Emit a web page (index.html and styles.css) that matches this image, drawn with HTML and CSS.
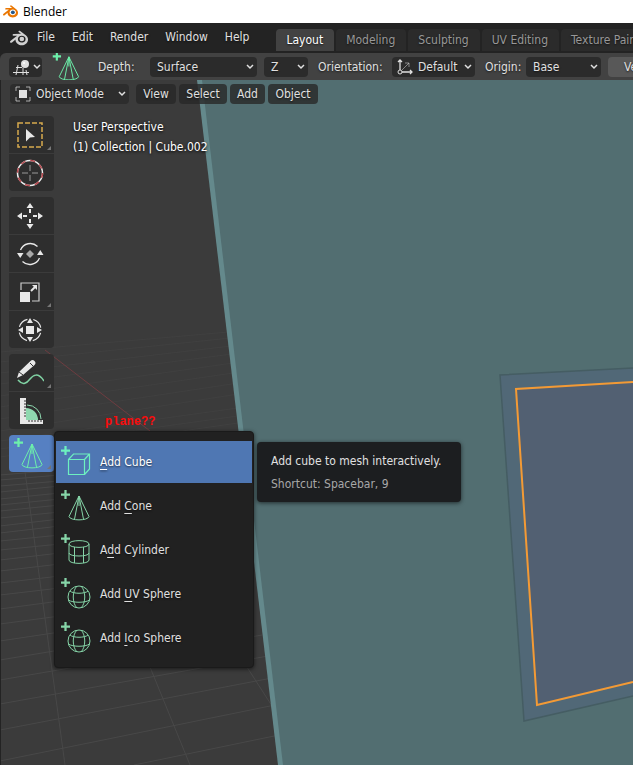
FILE: index.html
```html
<!DOCTYPE html>
<html lang="en">
<head>
<meta charset="utf-8">
<meta name="viewport" content="width=device-width, initial-scale=1">
<title>Blender</title>
<link rel="stylesheet" href="styles.css">
</head>
<body>
<svg class="defs" aria-hidden="true">
  <symbol id="logo" viewBox="0 0 24 24"><path d="M7.35 14.831c.006.314.106.922.256 1.398a7.372 7.372 0 0 0 1.593 2.757 8.227 8.227 0 0 0 2.787 2.001 8.947 8.947 0 0 0 3.66.76 8.964 8.964 0 0 0 3.657-.772 8.285 8.285 0 0 0 2.785-2.01 7.428 7.428 0 0 0 1.592-2.762 6.964 6.964 0 0 0 .25-3.074 7.123 7.123 0 0 0-1.016-2.779 7.764 7.764 0 0 0-1.852-2.043h.002L13.566 2.55l-.02-.015c-.492-.378-1.319-.376-1.86.002-.547.382-.609 1.015-.123 1.415l-.001.001 3.126 2.543-9.53.01h-.013c-.788.001-1.545.518-1.695 1.172-.154.665.38 1.217 1.2 1.22V8.9l4.83-.01-8.62 6.617-.034.025c-.813.622-1.075 1.658-.563 2.313.52.667 1.625.668 2.447.004L7.414 14s-.069.52-.063.831zm12.09 1.741c-.97.988-2.326 1.548-3.795 1.55-1.47.004-2.827-.552-3.797-1.538a4.51 4.51 0 0 1-1.036-1.622 4.282 4.282 0 0 1 .282-3.519 4.702 4.702 0 0 1 1.153-1.371c.942-.768 2.141-1.183 3.396-1.185 1.256-.002 2.455.41 3.398 1.175.48.391.87.854 1.152 1.367a4.28 4.28 0 0 1 .522 1.706 4.236 4.236 0 0 1-.239 1.811 4.54 4.54 0 0 1-1.035 1.626"/><circle class="logo-eye" cx="15.750" cy="13.350" r="3.100"/></symbol>
  <symbol id="chevron" viewBox="0 0 8 6"><path d="M1 1l3 3 3-3" fill="none" stroke="currentColor" stroke-width="1.500"/></symbol>
  <symbol id="plus" viewBox="0 0 8 8"><path d="M4 0v8M0 4h8" stroke="currentColor" stroke-width="2"/></symbol>
  <symbol id="cone" viewBox="0 0 24 26"><path d="M12 1L2 21.500C3 26 21 26 22 21.500L12 1zM12 1L7.500 24.200M12 1l4.500 23.200M12 1v10" fill="none" stroke="currentColor"/></symbol>
  <symbol id="cube" viewBox="0 0 24 24"><path d="M1.500 7.500h16v15h-16zM1.500 7.500l5-5.500h16v15l-5 5.500M17.500 7.500l5-5.500" fill="none" stroke="currentColor" stroke-width="1.200"/></symbol>
  <symbol id="cylinder" viewBox="0 0 24 26"><path d="M2 5v16c0 4.500 20 4.500 20 0V5M2 5c0-4.500 20-4.500 20 0S2 9.500 2 5zM2 14c0 4 20 4 20 0M7.500 8v16M16.500 8v16" fill="none" stroke="currentColor"/></symbol>
  <symbol id="sphere" viewBox="0 0 24 24"><path d="M23 12a11 11 0 1 1-22 0 11 11 0 0 1 22 0zM3 6c3 3 15 3 18 0M1.500 15c4 3 17 3 21 0M10 1C5 6 5 18 10 23M14 1c5 5 5 17 0 22" fill="none" stroke="currentColor"/></symbol>
</svg>

<header class="titlebar">
  <svg class="title-logo" aria-hidden="true"><use href="#logo"/></svg>
  <span>Blender</span>
</header>

<nav class="menubar" aria-label="Main">
  <svg class="app-logo" aria-hidden="true"><use href="#logo"/></svg>
  <button class="menu-button">File</button>
  <button class="menu-button">Edit</button>
  <button class="menu-button">Render</button>
  <button class="menu-button">Window</button>
  <button class="menu-button">Help</button>
  <div class="tabs" role="tablist" aria-label="Workspaces">
    <button class="tab tab-active" role="tab" aria-selected="true">Layout</button>
    <button class="tab" role="tab">Modeling</button>
    <button class="tab" role="tab">Sculpting</button>
    <button class="tab" role="tab">UV Editing</button>
    <button class="tab" role="tab">Texture Paint</button>
  </div>
</nav>

<section class="settings" aria-label="Tool settings">
  <button class="snap" aria-label="Editor type">
    <svg class="snap-icon" viewBox="0 0 18 18" fill="none" stroke="currentColor" aria-hidden="true"><path d="M3 9.500h6M0 14.500h16M5 7L3 17M10 10v7M13 12l1 5"/><circle cx="12" cy="6" r="4" fill="currentColor" stroke="none"/><circle cx="11" cy="5" r="1" fill="#fff" stroke="none"/></svg>
    <svg class="chevron" aria-hidden="true"><use href="#chevron"/></svg>
  </button>
  <svg class="active-tool" viewBox="0 0 28 28" aria-hidden="true"><use href="#plus" width="9" height="9" y="-1"/><use href="#cone" x="5" y="3" width="24" height="26"/></svg>
  <label class="label-depth" for="depth">Depth:</label>
  <span class="field field-depth"><select id="depth"><option>Surface</option></select><svg class="chevron" aria-hidden="true"><use href="#chevron"/></svg></span>
  <span class="field field-axis"><select aria-label="Plane axis"><option>Z</option></select><svg class="chevron" aria-hidden="true"><use href="#chevron"/></svg></span>
  <label class="label-orientation" for="orientation">Orientation:</label>
  <span class="field field-icon field-orientation">
    <svg class="field-mark" viewBox="0 0 16 16" fill="none" stroke="currentColor" aria-hidden="true"><path d="M3 11V1M1 3l2-2 2 2M5 13h10M13 11l2 2-2 2" stroke-width="1.300"/><path d="M5 11l7-7M8 4h4v4" opacity=".5"/><circle cx="3" cy="13" r="2"/></svg>
    <select id="orientation"><option>Default</option></select><svg class="chevron" aria-hidden="true"><use href="#chevron"/></svg></span>
  <label class="label-origin" for="origin">Origin:</label>
  <span class="field field-origin"><select id="origin"><option>Base</option></select><svg class="chevron" aria-hidden="true"><use href="#chevron"/></svg></span>
  <button class="vertex">Vertex</button>
</section>

<main class="viewport">
  <svg class="scene" viewBox="0 80 633 685" preserveAspectRatio="xMinYMin slice" role="img" aria-label="3D scene">
    <g class="grid grid-far">
      <path d="M0 352L240 331M0 362L240 337M0 373L240 345M0 384L240 353M0 396L240 362M0 407L240 372M0 419L245 382M0 431L245 393M0 441L245 407M0 449L245 415M0 457L245 422"/>
    </g>
    <g class="grid">
      <path d="M0 475l60-5M0 480l60-5M0 486l60-5M0 492l60-6M0 499l60-6M0 505l60-6M0 511l60-6M0 518l60-6M0 526l60-7M0 533l60-7M0 541l60-6M0 550l60-6M0 560l60-7M0 571l60-7M0 583l60-7M0 595l60-7M0 609l60-8M0 624l60-8M0 641l60-9M0 660l60-10"/>
      <path d="M0 680L262 635M0 704L268 656M0 730L272 678M0 761L275 705M134 765L279 735M20 435L65 765M130 618L190 765M236 650L272 706"/>
    </g>
    <path class="axis" d="M45 350L150 431"/>
    <path class="plane-edge" d="M197 80h10l77 685h-6z"/>
    <path class="plane" d="M202 80H633V765H283z"/>
    <path class="frame" d="M633 368L500 375L524 721L633 696"/>
    <path class="pane" d="M633 382L516 389L537 705L633 682"/>
    <text class="note" x="105" y="425">plane??</text>
    <path class="region-edge" d="M0 80h1v685H0z"/>
  </svg>

  <div class="mode-bar">
    <span class="field field-icon field-mode">
      <svg class="field-mark" viewBox="0 0 16 16" aria-hidden="true"><path d="M1 5V1h4M11 1h4v4M15 11v4h-4M5 15H1v-4" fill="none" stroke="currentColor" opacity=".7"/><path d="M4 4h8v8H4z" fill="currentColor"/></svg>
      <select aria-label="Mode"><option>Object Mode</option></select><svg class="chevron" aria-hidden="true"><use href="#chevron"/></svg></span>
    <button class="pill pill-view">View</button>
    <button class="pill pill-select">Select</button>
    <button class="pill pill-add">Add</button>
    <button class="pill pill-object">Object</button>
  </div>

  <div class="workspace">
    <div class="toolbar" role="toolbar" aria-label="Tools">
      <div class="tool-group">
        <button class="tool tool-more" aria-label="Select Box"><svg viewBox="0 0 28 28"><rect x="2" y="2" width="24" height="24" fill="none" stroke="#d8ab4e" stroke-width="1.500" stroke-dasharray="5 2"/><path d="M10 8l9 8-5 .5-4 4z" fill="currentColor"/></svg></button>
        <button class="tool" aria-label="Cursor"><svg viewBox="0 0 28 28" fill="none"><circle cx="14" cy="14" r="12.500" stroke="#eee" stroke-width="1.500"/><circle cx="14" cy="14" r="12.500" stroke="#b5484e" stroke-width="1.500" stroke-dasharray="4.900 4.900"/><path d="M14 6v6M14 16v6M6 14h6M16 14h6" stroke="#999"/></svg></button>
      </div>
      <div class="tool-group">
        <button class="tool" aria-label="Move"><svg viewBox="0 0 28 28"><path d="M14 1l3.500 5h-7zM14 27l3.500-5h-7zM1 14l5-3.500v7zM27 14l-5-3.500v7z" fill="currentColor"/><path d="M14 7v4M14 17v4M7 14h4M17 14h4" stroke="currentColor" stroke-width="2"/></svg></button>
        <button class="tool" aria-label="Rotate"><svg viewBox="0 0 28 28"><path d="M4.500 10a10.500 10.500 0 0 1 17-3.500M23.500 18a10.500 10.500 0 0 1-17 3.500" fill="none" stroke="currentColor" stroke-width="1.300"/><path d="M1 13h6.500l-3.250 5zM21 15h6.500l-3.250-5z" fill="currentColor"/><path d="M14 10l4 4-4 4-4-4z" fill="#aaa"/></svg></button>
        <button class="tool tool-more" aria-label="Scale"><svg viewBox="0 0 28 28"><path d="M5 12V5h18v18h-7" fill="none" stroke="#ccc" stroke-width="1.200"/><path d="M4 14h10v10H4z" fill="currentColor"/><path d="M15 13l4-4" stroke="currentColor" stroke-width="2"/><path d="M16 7h5v5z" fill="currentColor"/></svg></button>
        <button class="tool" aria-label="Transform"><svg viewBox="0 0 28 28"><circle cx="14" cy="14" r="11" fill="none" stroke="currentColor" stroke-width="1.200" stroke-dasharray="11.300 5.980" stroke-dashoffset="-3"/><path d="M10 10h8v8h-8zM14 2l3 5h-6zM14 26l3-5h-6zM2 14l5-3v6zM26 14l-5-3v6z" fill="currentColor"/></svg></button>
      </div>
      <div class="tool-group">
        <button class="tool tool-more" aria-label="Annotate"><svg viewBox="0 0 28 28"><path d="M2 21c5 6 9 3 12-1s8-7 14 2" fill="none" stroke="#80d3a4" stroke-width="1.500"/><path d="M1 19l2-6L14.500 2q2-2 4 0t0 4L7 16z" fill="currentColor"/><path d="M14 4l3 3M3 13l4 3" stroke="#333"/></svg></button>
        <button class="tool" aria-label="Measure"><svg viewBox="0 0 28 28"><path d="M10 11a12 12 0 0 1 12 12H10z" fill="#8fd9b0"/><path d="M11 8a14 14 0 0 1 14 14" fill="none" stroke="#8fd9b0"/><path d="M4 1h6v22h17v4H4z" fill="currentColor"/><path d="M8 4h2M8 7h2M8 10h2M8 13h2M8 16h2M8 19h2M13 23v2M16 23v2M19 23v2M22 23v2M25 23v2" stroke="#333"/></svg></button>
      </div>
      <div class="tool-group">
        <button class="tool tool-more tool-active" aria-label="Add Cone" aria-haspopup="menu"><svg class="add-icon" viewBox="0 0 34 34"><use href="#plus" x="1" y="1" width="9" height="9"/><use href="#cone" x="7" y="6" width="24" height="26"/></svg></button>
        <div class="popup" role="menu">
          <button class="item item-active" role="menuitem"><svg class="add-icon" viewBox="0 0 34 34"><use href="#plus" x="1" y="1" width="9" height="9"/><use href="#cube" x="7" y="7" width="24" height="24"/></svg><span><u>A</u>dd Cube</span></button>
          <button class="item" role="menuitem"><svg class="add-icon" viewBox="0 0 34 34"><use href="#plus" x="1" y="1" width="9" height="9"/><use href="#cone" x="7" y="6" width="24" height="26"/></svg><span>Add <u>C</u>one</span></button>
          <button class="item" role="menuitem"><svg class="add-icon" viewBox="0 0 34 34"><use href="#plus" x="1" y="1" width="9" height="9"/><use href="#cylinder" x="7" y="6" width="24" height="26"/></svg><span>A<u>d</u>d Cylinder</span></button>
          <button class="item" role="menuitem"><svg class="add-icon" viewBox="0 0 34 34"><use href="#plus" x="1" y="1" width="9" height="9"/><use href="#sphere" x="7" y="8" width="24" height="24"/></svg><span>Add <u>U</u>V Sphere</span></button>
          <button class="item" role="menuitem"><svg class="add-icon" viewBox="0 0 34 34"><use href="#plus" x="1" y="1" width="9" height="9"/><use href="#sphere" x="7" y="8" width="24" height="24"/></svg><span>Add <u>I</u>co Sphere</span></button>
        </div>
        <div class="tooltip" role="tooltip">
          <div>Add cube to mesh interactively.</div>
          <div class="shortcut">Shortcut: Spacebar, 9</div>
        </div>
      </div>
    </div>
    <div class="overlay-text">
      <div>User Perspective</div>
      <div>(1) Collection | Cube.002</div>
    </div>
  </div>
</main>
</body>
</html>
```
FILE: styles.css
```css
* {
  box-sizing: border-box;
}

body {
  margin: 0;
  min-height: 100vh;
  display: flex;
  flex-direction: column;
  overflow: hidden;
  background: #232323;
  color: #e0e0e0;
  font-family: "DejaVu Sans Condensed", "DejaVu Sans", sans-serif;
  font-size: 12px;
}

button,
select {
  margin: 0;
  padding: 0;
  border: 0;
  border-radius: 4px;
  background: none;
  color: inherit;
  font: inherit;
  text-align: left;
  text-shadow: 0 1px 2px rgba(0, 0, 0, 0.6);
}

svg {
  flex: none;
}

.defs {
  position: absolute;
  width: 0;
  height: 0;
}

.titlebar {
  display: flex;
  align-items: center;
  gap: 5px;
  height: 23px;
  padding-left: 3px;
  background: #fff;
  color: #000;
  font-family: "Open Sans", sans-serif;
}

.title-logo {
  --eye: #265787;
  width: 15px;
  height: 15px;
  fill: #ea7600;
}

.logo-eye {
  fill: var(--eye, #d0d0d0);
}

.menubar {
  display: flex;
  align-items: center;
  height: 30px;
  padding-left: 10px;
  background: #232323;
}

.app-logo {
  width: 18px;
  height: 18px;
  fill: #d0d0d0;
}

.menu-button {
  flex: none;
  height: 28px;
  padding: 0 8px 0 9px;
  align-self: flex-start;
}

.tabs {
  display: flex;
  flex: 1;
  align-self: flex-end;
  gap: 2px;
  min-width: 0;
  padding-bottom: 2px;
  margin-left: 19px;
  overflow: hidden;
}

.tab {
  flex: none;
  height: 22px;
  padding: 0 11px 0 10px;
  border-radius: 4px 4px 0 0;
  background: #2b2b2b;
  color: #989898;
  white-space: nowrap;
}

.tab-active {
  background: #424242;
  color: #fff;
}

.settings {
  display: flex;
  align-items: center;
  height: 27px;
  padding-left: 9px;
  border-radius: 6px 0 0 0;
  background: #424242;
  overflow: hidden;
  text-shadow: 0 1px 2px rgba(0, 0, 0, 0.6);
}

.settings > * {
  flex: none;
}

.snap {
  display: flex;
  align-items: center;
  gap: 2px;
  width: 33px;
  height: 20px;
  padding-left: 4px;
  background: #2b2b2b;
}

.snap-icon {
  width: 18px;
  height: 18px;
}

.active-tool {
  width: 28px;
  height: 27px;
  margin: 0 18px 0 10px;
  color: #6df0ab;
}

.label-depth {
  width: 52px;
}

.label-orientation {
  width: 74px;
  margin-left: 10px;
}

.label-origin {
  width: 41px;
  margin-left: 10px;
}

.field {
  display: flex;
  align-items: center;
  position: relative;
  height: 20px;
  border-radius: 4px;
  background: #2b2b2b;
}

.field select {
  width: 100%;
  height: 20px;
  padding: 0 14px 0 7px;
  appearance: none;
}

.field-icon select {
  padding-left: 26px;
}

.field option {
  background: #2b2b2b;
}

.field-mark {
  position: absolute;
  left: 5px;
  width: 16px;
  height: 16px;
}

.chevron {
  width: 8px;
  height: 6px;
}

.field .chevron {
  position: absolute;
  right: 3px;
  pointer-events: none;
}

.field-depth {
  width: 107px;
}

.field-axis {
  width: 44px;
  margin-left: 7px;
}

.field-orientation {
  width: 83px;
}

.field-origin {
  width: 75px;
}

.vertex {
  width: 80px;
  height: 20px;
  margin-left: 7px;
  padding-left: 16px;
  background: #585858;
}

.viewport {
  position: relative;
  flex: 1;
  overflow: hidden;
  background: #3b3b3b;
}

.scene {
  position: absolute;
  width: 100%;
  height: 100%;
}

.grid {
  fill: none;
  stroke: #484848;
}

.grid-far {
  stroke: #404040;
}

.axis {
  fill: none;
  stroke: #6e3c40;
}

.plane-edge {
  fill: #64898c;
}

.plane {
  fill: #526e71;
}

.frame {
  fill: #516877;
  stroke: #455d63;
  stroke-width: 1.5;
}

.pane {
  fill: #526072;
  stroke: #f39a35;
  stroke-width: 2;
}

.note {
  fill: #f80c0c;
  font: bold 12px "Liberation Mono", monospace;
}

.region-edge {
  fill: #232323;
}

.mode-bar {
  display: flex;
  position: relative;
  gap: 3px;
  padding: 4px 10px;
}

.field-mode {
  width: 119px;
  margin-right: 4px;
  background: #2d2d2d;
}

.pill {
  height: 20px;
  background: rgba(40, 40, 40, 0.8);
  text-align: center;
}

.pill-view {
  width: 40px;
}

.pill-select {
  width: 48px;
}

.pill-add {
  width: 35px;
}

.pill-object {
  width: 50px;
}

.workspace {
  display: flex;
  position: relative;
  gap: 19px;
  padding: 8px 9px;
}

.toolbar {
  display: flex;
  flex-direction: column;
  gap: 6px;
  width: 45px;
}

.tool-group {
  display: flex;
  flex-direction: column;
  position: relative;
  gap: 1px;
}

.tool {
  display: flex;
  align-items: center;
  justify-content: center;
  position: relative;
  height: 37px;
  padding-right: 3px;
  border-radius: 0;
  background: #2e2e2e;
  color: #e8e8e8;
}

.tool svg {
  width: 28px;
  height: 28px;
}

.tool:first-child {
  border-radius: 4px 4px 0 0;
}

.tool:last-child {
  border-radius: 0 0 4px 4px;
}

.tool-more::after {
  content: "";
  position: absolute;
  right: 3px;
  bottom: 3px;
  border: 2px solid #777;
  border-top-color: transparent;
  border-left-color: transparent;
}

.tool.tool-active {
  border-radius: 4px;
  background: #5680c2;
  color: #6df0ab;
}

.tool .add-icon,
.add-icon {
  width: 34px;
  height: 34px;
}

.popup {
  position: absolute;
  z-index: 1;
  top: -4px;
  left: 45px;
  display: flex;
  flex-direction: column;
  gap: 2px;
  width: 200px;
  padding: 9px 1px 8px;
  border: 1px solid #1a1a1a;
  border-radius: 4px;
  background: #212121;
  box-shadow: 0 1px 4px rgba(0, 0, 0, 0.6);
}

.item {
  display: flex;
  align-items: center;
  gap: 6px;
  height: 42px;
  padding-left: 4px;
  border-radius: 0;
}

.item .add-icon {
  color: #86d5a8;
}

.item-active {
  background: #4f77b3;
  color: #fff;
}

.item-active .add-icon {
  color: #6df0c0;
}

.item u {
  text-underline-offset: 3px;
}

.tooltip {
  position: absolute;
  z-index: 2;
  top: 7px;
  left: 248px;
  padding: 8px 14px 6px;
  width: 204px;
  border-radius: 4px;
  background: #1c1e20;
  box-shadow: 0 1px 4px rgba(0, 0, 0, 0.6);
  line-height: 23px;
  white-space: nowrap;
}

.shortcut {
  color: #a8a8a8;
}

.overlay-text {
  padding-top: 1px;
  color: #fff;
  line-height: 20px;
  text-shadow: 0 1px 3px #000;
  white-space: nowrap;
}
```
